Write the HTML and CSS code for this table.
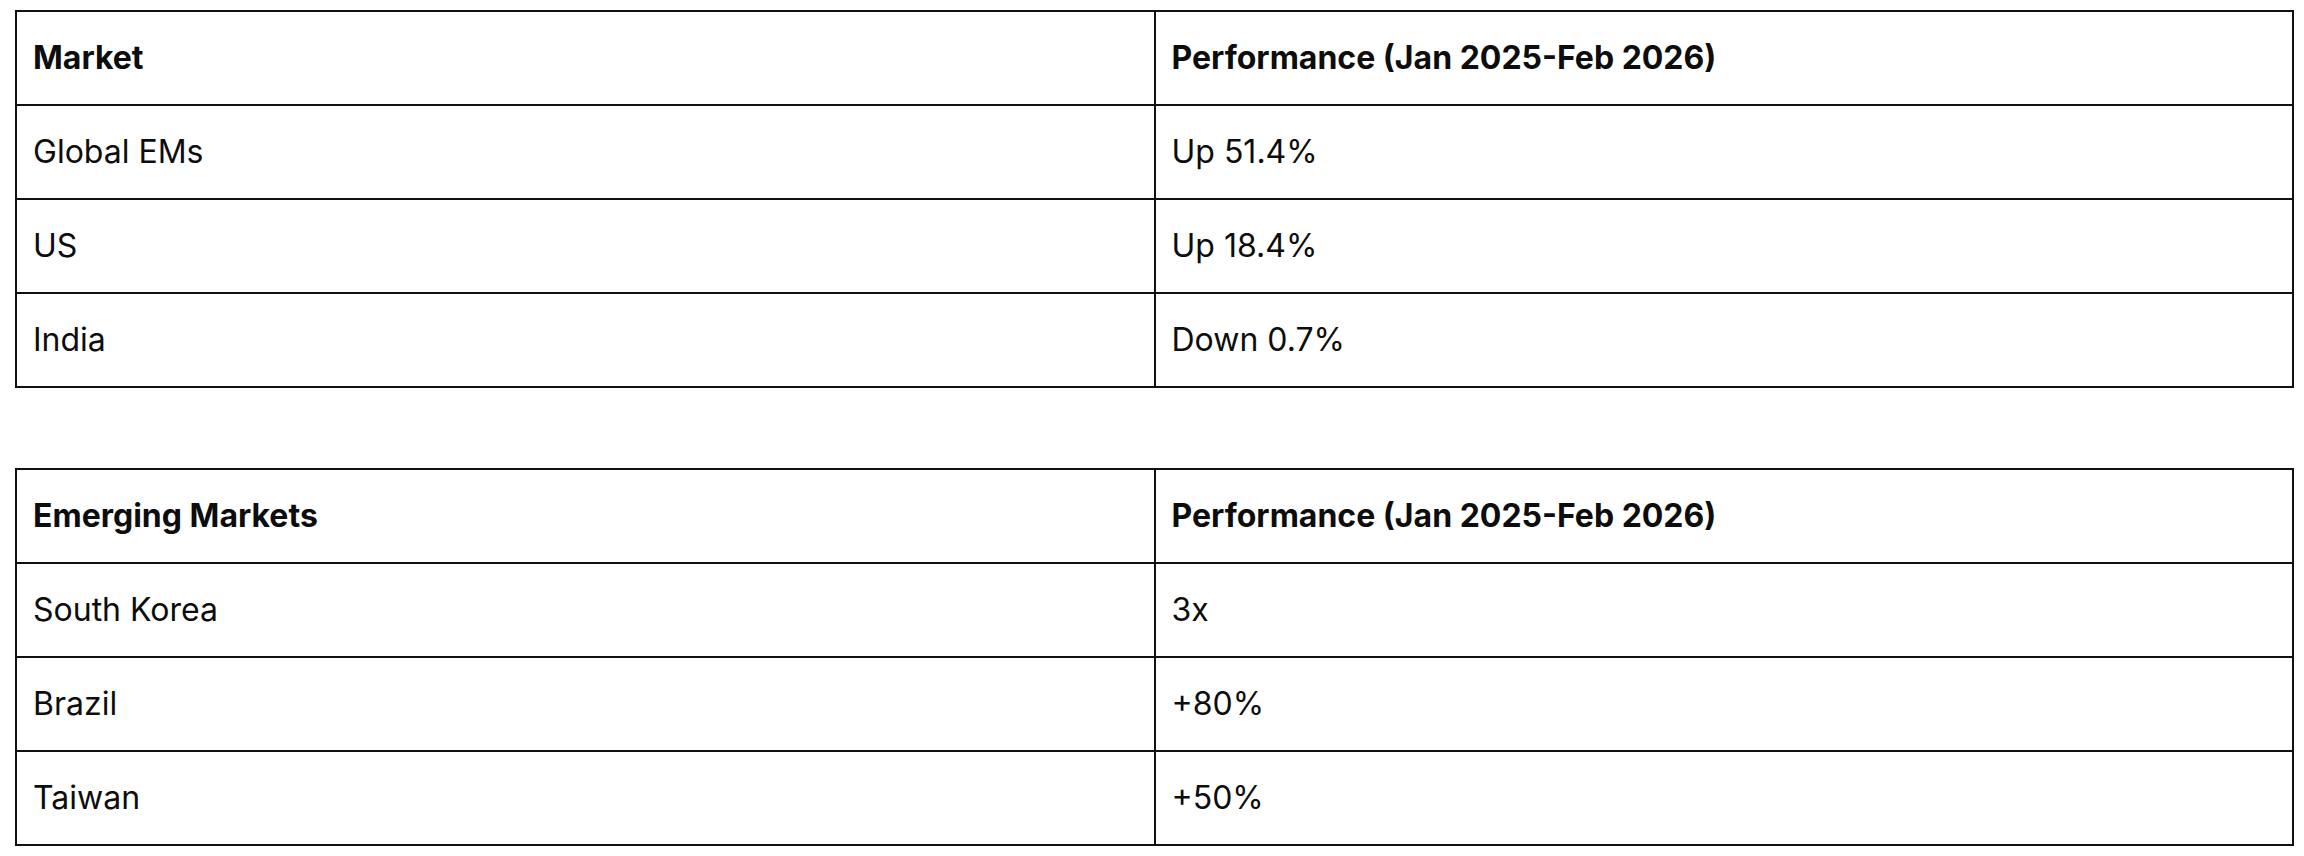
FILE: index.html
```html
<!DOCTYPE html>
<html>
<head>
<meta charset="utf-8">
<link rel="stylesheet" href="styles.css">
</head>
<body>
<div class="page">
  <table class="perf">
    <colgroup><col class="half"><col class="half"></colgroup>
    <thead>
      <tr><th>Market</th><th>Performance (Jan 2025-Feb 2026)</th></tr>
    </thead>
    <tbody>
      <tr><td>Global EMs</td><td>Up 51.4%</td></tr>
      <tr><td>US</td><td>Up 18.4%</td></tr>
      <tr><td>India</td><td>Down 0.7%</td></tr>
    </tbody>
  </table>
  <table class="perf">
    <colgroup><col class="half"><col class="half"></colgroup>
    <thead>
      <tr><th>Emerging Markets</th><th>Performance (Jan 2025-Feb 2026)</th></tr>
    </thead>
    <tbody>
      <tr><td>South Korea</td><td>3x</td></tr>
      <tr><td>Brazil</td><td>+80%</td></tr>
      <tr><td>Taiwan</td><td>+50%</td></tr>
    </tbody>
  </table>
</div>
</body>
</html>
```
FILE: styles.css
```css
html, body {
  margin: 0;
  padding: 0;
  background: #ffffff;
}
.page {
  padding: 10px 10px 0 15px;
  display: flex;
  flex-direction: column;
  gap: 80px;
  font-family: Inter, "Liberation Sans", sans-serif;
  color: #0d0d0d;
}
.perf {
  width: 100%;
  table-layout: fixed;
  border-collapse: separate;
  border-spacing: 0;
  border-top: 2px solid #111;
  border-left: 2px solid #111;
}
.half {
  width: 50%;
}
.perf th,
.perf td {
  height: 92px;
  box-sizing: content-box;
  padding: 0 16px;
  border-right: 2px solid #111;
  border-bottom: 2px solid #111;
  text-align: left;
  vertical-align: middle;
  font-size: 32px;
  line-height: 1.2;
}
.perf th {
  font-weight: 700;
}
.perf td {
  font-weight: 400;
}
```
